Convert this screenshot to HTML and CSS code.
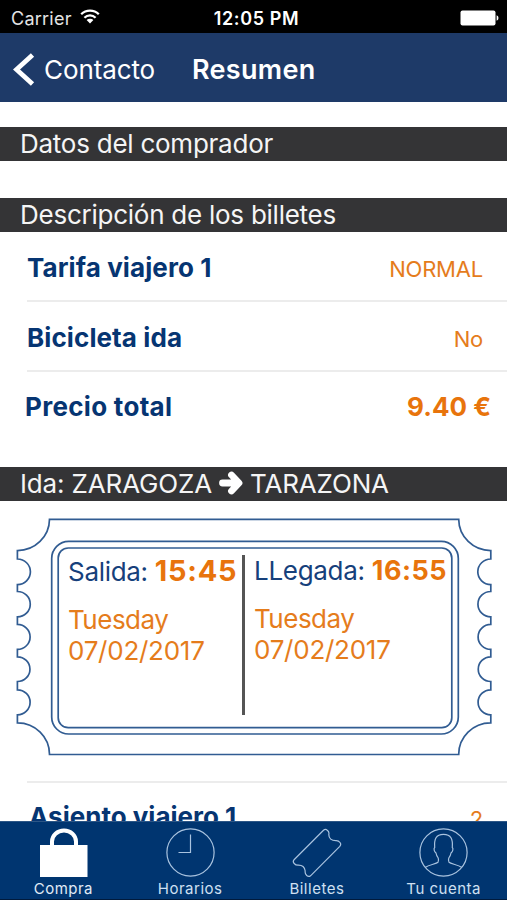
FILE: index.html
```
<!DOCTYPE html>
<html lang="es">
<head>
<meta charset="UTF-8">
<meta name="viewport" content="width=device-width, initial-scale=1.0">
<title>Resumen</title>
<link rel="stylesheet" href="styles.css">
</head>
<body>

<div class="screen">
    <div class="status-bar">
        <div class="carrier">
            <span>Carrier</span>
            <svg class="wifi" width="20" height="15" viewBox="0 0 20 15">
                <path d="M1.2 5.2a12.5 12.5 0 0 1 17.6 0M4.4 8.7a8 8 0 0 1 11.2 0" fill="none" stroke="#fff" stroke-width="2.3"/>
                <path d="M6.6 11.1a4.8 4.8 0 0 1 6.8 0L10 14.6z" fill="#fff"/>
            </svg>
        </div>
        <div class="clock">12:05 PM</div>
        <div class="battery">
            <svg width="39" height="16" viewBox="0 0 39 16">
                <rect x="0.5" y="0.5" width="35" height="15" rx="2" fill="#fff"/>
                <path d="M36.6 5.2a3 3 0 0 1 0 5.6z" fill="#fff"/>
            </svg>
        </div>
    </div>

    <div class="nav-bar">
        <a class="back" href="#">
            <svg width="22" height="34" viewBox="0 0 22 34">
                <path d="M19.5 2L3.5 16.5L19.5 31" fill="none" stroke="#fff" stroke-width="4.8"/>
            </svg>
            <span>Contacto</span>
        </a>
        <h1>Resumen</h1>
    </div>

    <div class="content">
        <h2 class="section buyer">Datos del comprador</h2>
        <h2 class="section description">Descripción de los billetes</h2>
        <div class="row">
            <span class="label">Tarifa viajero 1</span>
            <span class="value">NORMAL</span>
        </div>
        <div class="row">
            <span class="label">Bicicleta ida</span>
            <span class="value">No</span>
        </div>
        <div class="row total">
            <span class="label">Precio total</span>
            <span class="price">9.40 €</span>
        </div>

        <h2 class="section trip">
            <span>Ida: ZARAGOZA</span>
            <svg width="24" height="24" viewBox="0 0 24 24">
                <path d="M3.5 12H19M12.5 4L20 12L12.5 20" fill="none" stroke="#fff" stroke-width="6.8" stroke-linecap="round" stroke-linejoin="round"/>
            </svg>
            <span>TARAZONA</span>
        </h2>

        <div class="ticket">
            <svg class="ticket-frame" width="476" height="238" viewBox="16 518 476 238">
                <path d="M49.5 519.3H458.7A32 31.5 0 0 0 490.8 550.6V559A12.5 12.3 0 0 0 490.8 584.6V591.5A12.5 12.3 0 0 0 490.8 616.8V624.4A12.5 12.3 0 0 0 490.8 649.4V656.8A12.5 12.3 0 0 0 490.8 681.5V689.8A12.5 12.3 0 0 0 490.8 714.8V722.8A32 31.5 0 0 0 458.7 754.5H49.5A32 31.5 0 0 0 17.4 722.8V714.8A12.5 12.3 0 0 0 17.4 689.8V681.5A12.5 12.3 0 0 0 17.4 656.8V649.4A12.5 12.3 0 0 0 17.4 624.4V616.8A12.5 12.3 0 0 0 17.4 591.5V584.6A12.5 12.3 0 0 0 17.4 559V550.6A32 31.5 0 0 0 49.5 519.3Z"/>
                <rect x="51.7" y="541.4" width="406.6" height="192.6" rx="17"/>
                <rect x="58.2" y="548" width="393.6" height="179.7" rx="10"/>
            </svg>
            <div class="leg departure">
                <p class="time">Salida: <b>15:45</b></p>
                <p class="date"><span class="day">Tuesday</span><br>07/02/2017</p>
            </div>
            <div class="leg arrival">
                <p class="time">LLegada: <b>16:55</b></p>
                <p class="date"><span class="day">Tuesday</span><br>07/02/2017</p>
            </div>
        </div>

        <div class="row seat">
            <span class="label">Asiento viajero 1</span>
            <span class="value">2</span>
        </div>
    </div>

    <div class="tab-bar">
        <a class="tab active" href="#">
            <svg width="50" height="50" viewBox="0 0 50 50">
                <path d="M2 17H49.5V49H2z" fill="#fff"/>
                <path d="M14 18V13.500a12 11 0 0 1 24 0V18" fill="none" stroke="#fff" stroke-width="4"/>
            </svg>
            <span>Compra</span>
        </a>
        <a class="tab" href="#">
            <svg class="line-icon" width="50" height="50" viewBox="0 0 50 50">
                <circle cx="25.5" cy="24.5" r="23.6"/>
                <path d="M25.5 6.500V24.500H13.500"/>
            </svg>
            <span>Horarios</span>
        </a>
        <a class="tab" href="#">
            <svg class="line-icon" width="50" height="50" viewBox="0 0 50 50">
                <path d="M31.500 2.300Q33.500 0.500 35.300 2.300Q37.500 4 36.800 6.500C36.800 10.500 39.500 12.700 43.800 12.700Q46.500 12.500 48 14.500Q49.500 16.500 47.800 18.300L18.500 47.800Q16.700 49.300 14.700 47.500Q12.700 45.500 13.200 43C12.500 38.500 10.200 37.200 6.500 37.200Q3.800 37.400 2.200 35.500Q0.300 33.500 2.300 31.500Z"/>
            </svg>
            <span>Billetes</span>
        </a>
        <a class="tab" href="#">
            <svg class="line-icon" width="50" height="50" viewBox="0 0 50 50">
                <circle cx="24.5" cy="24.5" r="23.6"/>
                <path d="M6 39.500C10.500 36.500 17 36 19 34.200C19.800 33 19.700 31.500 19.200 30C18 28.500 17.300 27 17 25C15.100 23.500 14.500 20.500 15.700 19.500C15 11 17 6.300 24.500 6.300C32 6.300 34 11 33.300 19.500C34.500 20.500 33.900 23.500 32 25C31.700 27 31 28.500 29.800 30C29.300 31.500 29.200 33 30 34.200C32 36 38.500 36.500 43 39.500"/>
            </svg>
            <span>Tu cuenta</span>
        </a>
    </div>
</div>

</body>
</html>
```
FILE: styles.css
```
* {
    box-sizing: border-box;
}
body {
    margin: 0;
    font-family: Inter, "Liberation Sans", sans-serif;
    background-color: #fff;
}
h1, h2, p {
    margin: 0;
    font-weight: 400;
}
a {
    color: inherit;
    text-decoration: none;
}
svg {
    display: block;
    flex: none;
}
.screen {
    display: flex;
    flex-direction: column;
    width: 507px;
    height: 900px;
    overflow: hidden;
    white-space: nowrap;
}

/* Status bar */
.status-bar {
    display: grid;
    grid-template-columns: 1fr auto 1fr;
    align-items: center;
    flex: none;
    height: 33px;
    padding: 3px 8px 0 11px;
    background-color: #000;
    color: #fff;
    font-size: 18px;
}
.carrier {
    display: flex;
    align-items: center;
    gap: 8px;
    color: #e4e4e4;
    letter-spacing: 0.25px;
}
.wifi {
    margin-top: -4px;
}
.clock {
    padding-left: 3px;
    font-weight: 600;
    letter-spacing: 0.65px;
}
.battery {
    justify-self: end;
}

/* Navigation */
.nav-bar {
    display: flex;
    align-items: center;
    flex: none;
    height: 69px;
    padding: 4px 0 0 13px;
    background-color: #1e3a68;
    color: #fff;
}
.back {
    display: flex;
    align-items: center;
    gap: 9px;
    width: 179px;
    font-size: 26px;
    letter-spacing: -0.1px;
}
.nav-bar h1 {
    font-size: 27px;
    font-weight: 600;
    letter-spacing: 0.3px;
}

/* Content */
.content {
    flex: 1;
    min-height: 0;
    padding-top: 25px;
    overflow: hidden;
}
.section {
    display: flex;
    align-items: center;
    height: 34px;
    padding: 0 0 2px 20px;
    background-color: #343436;
    color: #f5f5f5;
    font-size: 26px;
    letter-spacing: -0.25px;
}
.buyer {
    margin-bottom: 37px;
}
.row {
    display: flex;
    align-items: center;
    justify-content: space-between;
    height: 70px;
    margin-left: 27px;
    padding: 2px 24px 0 0;
    border-bottom: 2px solid #ececec;
}
.label {
    color: #063572;
    font-size: 26px;
    font-weight: 700;
    letter-spacing: 0.1px;
}
.value {
    padding-top: 4px;
    color: #e57c1c;
    font-size: 22px;
    letter-spacing: -0.2px;
}
.total {
    height: 69px;
    margin-left: 25px;
    padding: 0 16px 0 0;
    border-bottom: none;
}
.total .label {
    letter-spacing: 0.3px;
}
.price {
    color: #e8740c;
    font-size: 26px;
    font-weight: 700;
}
.trip {
    margin-top: 26px;
    letter-spacing: -0.15px;
}
.trip svg {
    margin: 0 7px;
}

/* Ticket */
.ticket {
    position: relative;
    display: flex;
    width: 476px;
    height: 238px;
    margin: 17px 0 25px 16px;
    padding: 37px 34px 41px 52px;
}
.ticket-frame {
    position: absolute;
    top: 0;
    left: 0;
    fill: none;
    stroke: #315c92;
    stroke-width: 1.7;
}
.departure {
    width: 177px;
    border-right: 3px solid #555;
}
.arrival {
    padding-left: 9px;
}
.time {
    height: 32px;
    line-height: 32px;
    color: #16407b;
    font-size: 26px;
    letter-spacing: -0.3px;
}
.time b {
    color: #e8740c;
    font-size: 29px;
    letter-spacing: 0.7px;
}
.date {
    margin-top: 17px;
    color: #e57c1c;
    font-size: 26px;
    letter-spacing: -0.25px;
    line-height: 31px;
}
.day {
    letter-spacing: -0.5px;
}
.arrival .date {
    margin-top: 16px;
}
.arrival .time b {
    font-size: 27px;
    letter-spacing: 0.5px;
}
.seat {
    height: 69px;
    padding: 0 24px 0 2px;
    border-top: 2px solid #ececec;
    border-bottom: none;
}
.seat .label {
    letter-spacing: 0;
}

/* Tabs */
.tab-bar {
    display: grid;
    grid-template-columns: repeat(4, 1fr);
    flex: none;
    height: 79px;
    padding-top: 6px;
    background-color: #003570;
    border-top: 1px solid #2c5686;
    border-bottom: 1px solid #001a3c;
}
.tab {
    display: flex;
    flex-direction: column;
    align-items: center;
    gap: 1px;
    color: #cfe0f2;
    font-size: 15px;
    letter-spacing: 0.5px;
}
.active {
    color: #e0ebf6;
}
.line-icon {
    fill: none;
    stroke: #a9c3df;
    stroke-width: 1.2;
}
```
